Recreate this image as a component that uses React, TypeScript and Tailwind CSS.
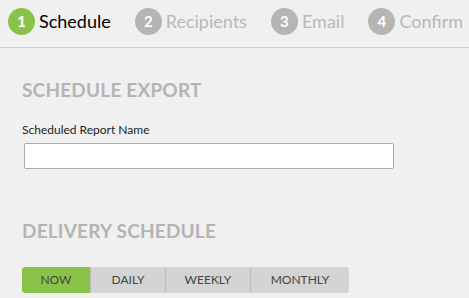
import React from "react";

const steps = [
  { n: 1, label: "Schedule", active: true },
  { n: 2, label: "Recipients", active: false },
  { n: 3, label: "Email", active: false },
  { n: 4, label: "Confirm", active: false },
];

const btns = [
  { label: "NOW", w: "w-[68px]", active: true },
  { label: "DAILY", w: "w-[75px]", active: false },
  { label: "WEEKLY", w: "w-[85px]", active: false },
  { label: "MONTHLY", w: "w-[99px]", active: false },
];

export default function App() {
  return (
    <div className="w-[469px] h-[298px] bg-[#f0f0f0] overflow-hidden" style={{ fontFamily: "Lato, 'Open Sans', sans-serif" }}>
      <div className="h-[48px] border-b border-[#cfcfcf] flex items-center pl-[8px] gap-[24px] pb-[5px] whitespace-nowrap">
        {steps.map((s) => (
          <div key={s.n} className="flex items-center gap-[4px] shrink-0">
            <div className={`w-[27px] h-[27px] rounded-full flex items-center justify-center text-white text-[15px] font-bold ${s.active ? "bg-[#8bc34a]" : "bg-[#b5b5b5]"}`}>{s.n}</div>
            <span className={`text-[18px] ${s.active ? "text-black" : "text-[#b8b8b8]"}`}>{s.label}</span>
          </div>
        ))}
      </div>
      <div className="pl-[22px]">
        <div className="mt-[30px] text-[19px] font-bold text-[#b4b4b4] leading-[24px] tracking-[0.2px]">SCHEDULE EXPORT</div>
        <div className="mt-[20px] text-[12px] text-[#222] leading-[16px]">Scheduled Report Name</div>
        <input className="mt-[5px] ml-[2px] w-[370px] h-[26px] bg-white border border-[#aaaaaa] rounded-[2px] block" />
        <div className="mt-[50px] text-[19px] font-bold text-[#b4b4b4] leading-[24px] tracking-[0.2px]">DELIVERY SCHEDULE</div>
        <div className="mt-[24px] flex h-[26px] rounded-[3px] overflow-hidden w-fit">
          {btns.map((b, i) => (
            <div key={b.label} className={`${b.w} flex items-center justify-center text-[12px] text-[#444] ${b.active ? "bg-[#8bc34a]" : "bg-[#d4d4d4]"} ${i > 0 ? "border-l border-[#bdbdbd]" : ""}`}>{b.label}</div>
          ))}
        </div>
      </div>
    </div>
  );
}
